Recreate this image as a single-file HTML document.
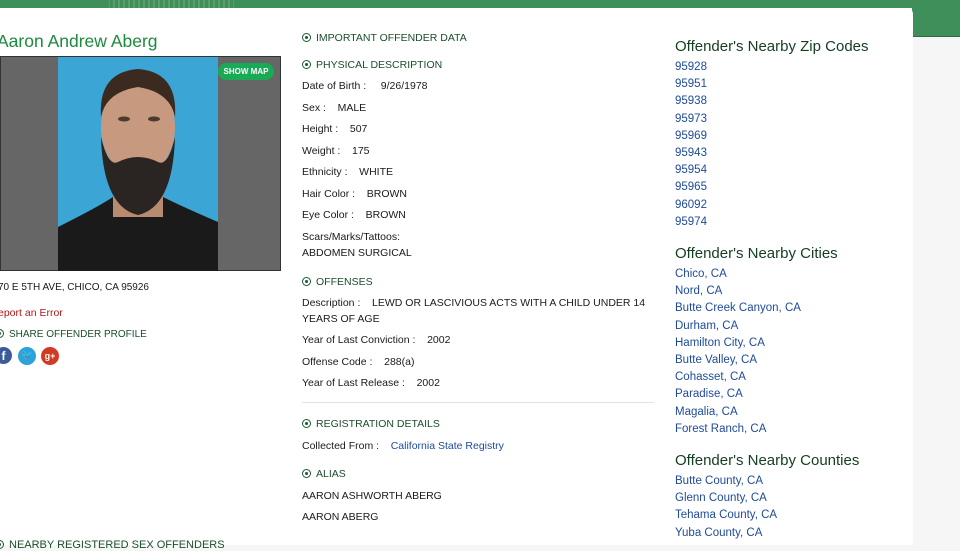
<!DOCTYPE html>
<html><head><meta charset="utf-8"><style>
*{margin:0;padding:0;box-sizing:border-box}
body{width:960px;height:545px;overflow:hidden;background:#f6f6f6;font-family:"Liberation Sans",sans-serif;position:relative}
.a{position:absolute;white-space:nowrap}
.t{font-size:10.5px;color:#1a1a1a}
.h{font-size:10.5px;color:#1b4d2b}
.h i{display:inline-block;width:9px;height:9px;border:1.5px solid #1b5a30;border-radius:50%;position:relative;margin-right:5px;top:1px}
.h i:after{content:"";position:absolute;left:1.5px;top:1.5px;width:3px;height:3px;background:#1b5a30;border-radius:50%}
.rh{font-size:15px;color:#143d22}
.l{font-size:11.5px;color:#1f4a9a;line-height:17.2px}
</style></head><body>
<div class="a" style="left:0;top:0;width:960px;height:8px;background:#3f8f5b"></div>
<div class="a" style="left:912px;top:0;width:48px;height:37px;background:#3f8f5b;border-bottom:1px solid #2d6b44"></div>
<div class="a" style="left:0;top:8px;width:913px;height:537px;background:#fff;border-top-right-radius:6px"></div>
<div class="a" style="left:0;top:0;width:960px;height:8px;background:repeating-linear-gradient(90deg,#3f8f5b 0,#3f8f5b 3px,#5d9e6a 3px,#5d9e6a 5px);-webkit-mask:linear-gradient(90deg,transparent 108px,#000 110px,#000 233px,transparent 235px)"></div>

<div class="a" style="left:-3px;top:31px;font-size:17.5px;color:#1d8a3e">Aaron Andrew Aberg</div>
<div class="a" style="left:0;top:56px;width:281px;height:215px;background:#666;border:1px solid #333">
<svg style="position:absolute;left:57px;top:0" width="160" height="214" viewBox="0 0 160 214">
<rect width="160" height="214" fill="#3ba6d6"/>
<path d="M0 170 Q40 150 55 140 L105 140 Q125 150 160 165 L160 214 L0 214Z" fill="#1a1a1a"/>
<rect x="55" y="120" width="50" height="40" fill="#b88a70"/>
<ellipse cx="80" cy="70" rx="37" ry="50" fill="#c79a80"/>
<path d="M43 60 Q40 15 80 12 Q120 15 117 60 Q112 35 80 30 Q48 35 43 60Z" fill="#3a2a20"/>
<path d="M43 80 Q45 150 80 158 Q115 150 117 80 Q110 110 100 105 Q80 95 60 105 Q50 110 43 80Z" fill="#2a2522"/>
<ellipse cx="66" cy="62" rx="6" ry="2.5" fill="#4a3a30"/><ellipse cx="96" cy="62" rx="6" ry="2.5" fill="#4a3a30"/>
</svg>
<div class="a" style="left:217px;top:6px;width:56px;height:17px;border-radius:9px;background:#1aaa55;color:#fff;font-size:8px;font-weight:bold;text-align:center;line-height:17px">SHOW MAP</div>
</div>
<div class="a t" style="left:-2px;top:282px;font-size:10px">70 E 5TH AVE, CHICO, CA 95926</div>
<div class="a" style="left:-2px;top:307px;font-size:10.5px;color:#b01818">eport an Error</div>
<div class="a h" style="left:-5px;top:328px;font-size:10px"><i></i>SHARE OFFENDER PROFILE</div>
<div class="a" style="left:-5px;top:347px;width:17px;height:17px;border-radius:50%;background:#3b5b9a;color:#fff;font-weight:bold;font-size:12px;text-align:center;line-height:18px">f</div>
<div class="a" style="left:18px;top:347px;width:18px;height:18px;border-radius:50%;background:#2aa3dc;color:#fff;font-size:10px;text-align:center;line-height:18px">🐦</div>
<div class="a" style="left:41px;top:347px;width:18px;height:18px;border-radius:50%;background:#d23a22;color:#fff;font-size:9px;font-weight:bold;text-align:center;line-height:18px">g+</div>
<div class="a h" style="left:-5px;top:539px;font-size:11px"><i></i>NEARBY REGISTERED SEX OFFENDERS</div>

<div class="a h" style="left:302px;top:32px"><i></i>IMPORTANT OFFENDER DATA</div>
<div class="a h" style="left:302px;top:59px"><i></i>PHYSICAL DESCRIPTION</div>
<div class="a t" style="left:302px;top:80px">Date of Birth :&nbsp;&nbsp;&nbsp;&nbsp; 9/26/1978</div>
<div class="a t" style="left:302px;top:102px">Sex :&nbsp;&nbsp;&nbsp; MALE</div>
<div class="a t" style="left:302px;top:123px">Height :&nbsp;&nbsp;&nbsp; 507</div>
<div class="a t" style="left:302px;top:145px">Weight :&nbsp;&nbsp;&nbsp; 175</div>
<div class="a t" style="left:302px;top:166px">Ethnicity :&nbsp;&nbsp;&nbsp; WHITE</div>
<div class="a t" style="left:302px;top:188px">Hair Color :&nbsp;&nbsp;&nbsp; BROWN</div>
<div class="a t" style="left:302px;top:209px">Eye Color :&nbsp;&nbsp;&nbsp; BROWN</div>
<div class="a t" style="left:302px;top:231px">Scars/Marks/Tattoos:</div>
<div class="a t" style="left:302px;top:247px">ABDOMEN SURGICAL</div>
<div class="a h" style="left:302px;top:276px"><i></i>OFFENSES</div>
<div class="a t" style="left:302px;top:297px">Description :&nbsp;&nbsp;&nbsp; LEWD OR LASCIVIOUS ACTS WITH A CHILD UNDER 14</div>
<div class="a t" style="left:302px;top:313px">YEARS OF AGE</div>
<div class="a t" style="left:302px;top:334px">Year of Last Conviction :&nbsp;&nbsp;&nbsp; 2002</div>
<div class="a t" style="left:302px;top:356px">Offense Code :&nbsp;&nbsp;&nbsp; 288(a)</div>
<div class="a t" style="left:302px;top:377px">Year of Last Release :&nbsp;&nbsp;&nbsp; 2002</div>
<div class="a" style="left:302px;top:402px;width:352px;height:1px;background:#e2e2e2"></div>
<div class="a h" style="left:302px;top:418px"><i></i>REGISTRATION DETAILS</div>
<div class="a t" style="left:302px;top:440px">Collected From :&nbsp;&nbsp;&nbsp; <span style="color:#1f4a9a">California State Registry</span></div>
<div class="a h" style="left:302px;top:468px"><i></i>ALIAS</div>
<div class="a t" style="left:302px;top:490px">AARON ASHWORTH ABERG</div>
<div class="a t" style="left:302px;top:511px">AARON ABERG</div>

<div class="a rh" style="left:675px;top:38px">Offender's Nearby Zip Codes</div>
<div class="a l" style="left:675px;top:59px">95928<br>95951<br>95938<br>95973<br>95969<br>95943<br>95954<br>95965<br>96092<br>95974</div>
<div class="a rh" style="left:675px;top:245px">Offender's Nearby Cities</div>
<div class="a l" style="left:675px;top:266px">Chico, CA<br>Nord, CA<br>Butte Creek Canyon, CA<br>Durham, CA<br>Hamilton City, CA<br>Butte Valley, CA<br>Cohasset, CA<br>Paradise, CA<br>Magalia, CA<br>Forest Ranch, CA</div>
<div class="a rh" style="left:675px;top:452px">Offender's Nearby Counties</div>
<div class="a l" style="left:675px;top:473px">Butte County, CA<br>Glenn County, CA<br>Tehama County, CA<br>Yuba County, CA</div>
</body></html>
